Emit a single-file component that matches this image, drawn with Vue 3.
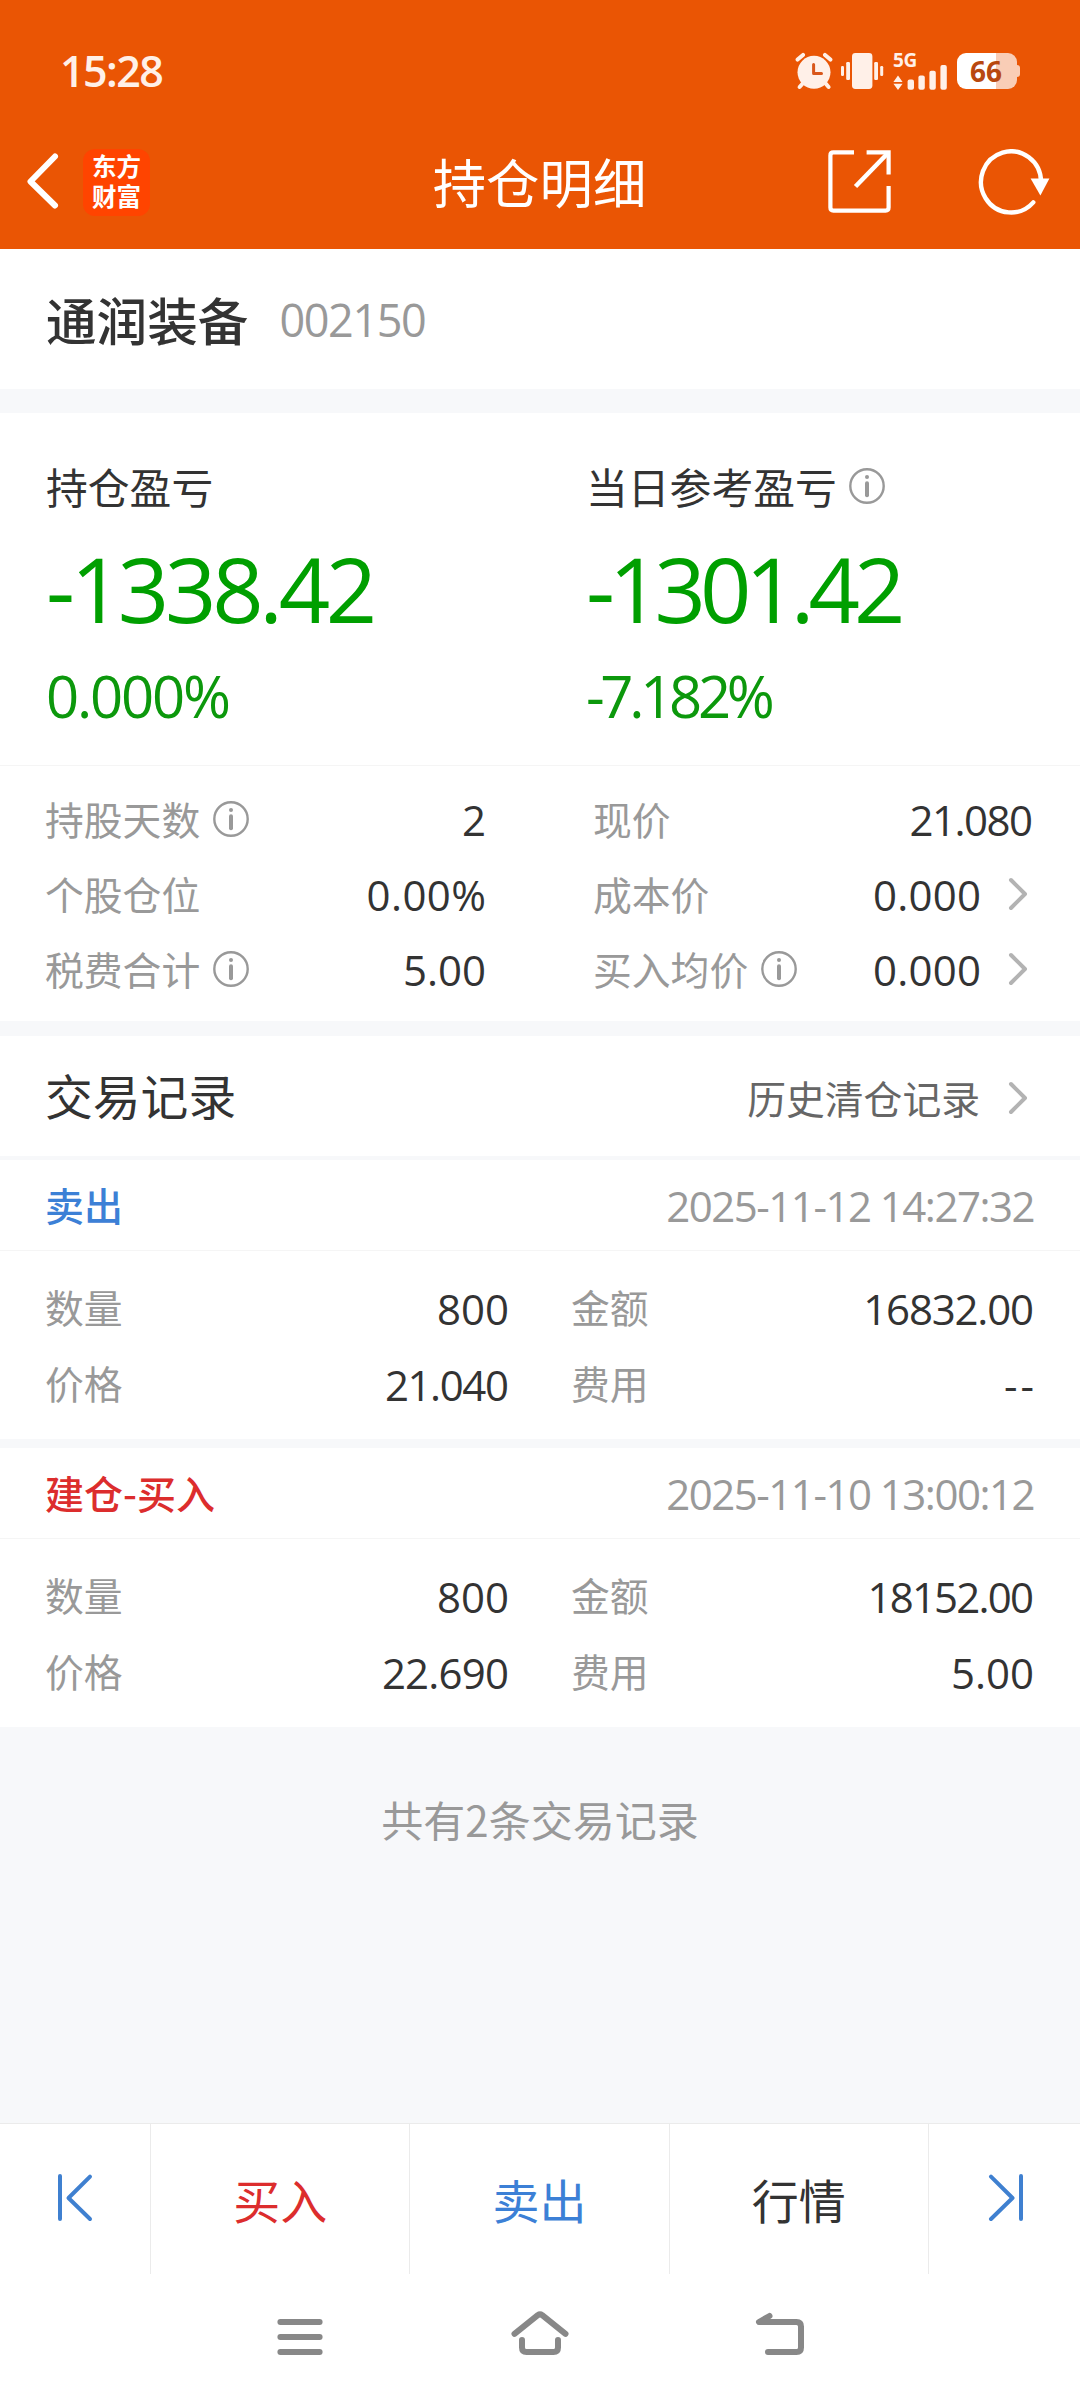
<script setup>
import { h } from 'vue'

const InfoIcon = () =>
  h('svg', { width: 36, height: 36, viewBox: '0 0 36 36', fill: 'none', stroke: '#999', 'stroke-width': 2.4 }, [
    h('circle', { cx: 18, cy: 18, r: 16.7 }),
    h('circle', { cx: 18, cy: 9, r: 2, fill: '#999', stroke: 'none' }),
    h('path', { d: 'M18 15.2V27.3', 'stroke-width': 4, 'stroke-linecap': 'round' }),
  ])

const ChevronIcon = () =>
  h('svg', { width: 20, height: 34, viewBox: '0 0 20 34', fill: 'none', stroke: '#b3b3b3', 'stroke-width': 4, 'stroke-linecap': 'round', 'stroke-linejoin': 'round' }, [
    h('path', { d: 'M3 3L17 17L3 31' }),
  ])

const profits = [
  { label: '持仓盈亏', amount: '-1338.42', amountGap: -4.3, rate: '0.000%', rateGap: -2.2 },
  { label: '当日参考盈亏', info: true, amount: '-1301.42', amountGap: -6, rate: '-7.182%', rateGap: -4.3 },
]

const stats = [
  [
    { label: '持股天数', info: true, value: '2', gap: 0 },
    { label: '个股仓位', value: '0.00%', gap: 0.4 },
    { label: '税费合计', info: true, value: '5.00', gap: 0 },
  ],
  [
    { label: '现价', value: '21.080', gap: -1.5 },
    { label: '成本价', value: '0.000', gap: 0.2, link: true },
    { label: '买入均价', info: true, value: '0.000', gap: 0.2, link: true },
  ],
]

const records = [
  {
    type: '卖出', kind: 'sell', time: '2025-11-12 14:27:32',
    cells: [
      { label: '数量', value: '800', gap: 0 },
      { label: '金额', value: '16832.00', gap: -1.2 },
      { label: '价格', value: '21.040', gap: -1.4 },
      { label: '费用', value: '--', gap: 3 },
    ],
  },
  {
    type: '建仓-买入', kind: 'buy', time: '2025-11-10 13:00:12',
    cells: [
      { label: '数量', value: '800', gap: 0 },
      { label: '金额', value: '18152.00', gap: -1.8 },
      { label: '价格', value: '22.690', gap: -0.8 },
      { label: '费用', value: '5.00', gap: 0 },
    ],
  },
]

const track = (gap) => ({ letterSpacing: gap + 'px', marginRight: -gap + 'px' })
</script>

<template>
  <div class="app">
    <header class="header">
      <div class="status">
        <span class="clock">15:28</span>
        <div class="status-icons">
          <svg class="alarm" width="38" height="38" viewBox="0 0 38 38">
            <g stroke="#fff0e8" stroke-width="4" stroke-linecap="round">
              <path d="M2.6 7.6L8 2.9M35.4 7.6L30 2.9" />
              <path d="M9 30L4.6 35M29.4 30L33.6 35" />
            </g>
            <circle cx="19" cy="20.3" r="16.5" fill="#fff0e8" />
            <path d="M18.6 12.4V21.4H26.5" fill="none" stroke="#d9561a" stroke-width="3" stroke-linecap="round" stroke-linejoin="round" />
          </svg>
          <svg class="vibrate" width="43" height="38" viewBox="0 0 43 38" fill="#fff0e8">
            <rect x="0" y="14" width="3" height="10" rx="1.2" />
            <rect x="5.2" y="10" width="3.8" height="18" rx="1.2" />
            <rect x="11" y="1" width="20.4" height="36" rx="3.4" />
            <rect x="33.2" y="10" width="3.8" height="18" rx="1.2" />
            <rect x="39.2" y="14" width="3" height="10" rx="1.2" />
          </svg>
          <div class="signal">
            <span class="net">5G</span>
            <svg width="55" height="25" viewBox="0 0 55 25" fill="#fff0e8">
              <path d="M5 10.5L9.6 17H0.4ZM5 25L9.6 18.8H0.4Z" />
              <rect x="14.6" y="14.4" width="6.4" height="10.4" rx="2" />
              <rect x="25.4" y="10.4" width="6.4" height="14.4" rx="2" />
              <rect x="36.4" y="5.8" width="6.4" height="19" rx="2" />
              <rect x="47.4" y="0" width="6.4" height="24.8" rx="2" />
            </svg>
          </div>
          <div class="battery"><span class="level">66</span></div>
        </div>
      </div>
      <div class="titlebar">
        <div class="lead">
          <svg width="34" height="58" viewBox="0 0 34 58" fill="none" stroke="#fff" stroke-width="6" stroke-linecap="round" stroke-linejoin="round">
            <path d="M30 3.5L5.5 28.5L30 52.5" />
          </svg>
          <div class="logo">东方<br />财富</div>
        </div>
        <h1 class="title">持仓明细</h1>
        <div class="tools">
          <svg width="64" height="64" viewBox="0 0 64 64" fill="none" stroke="#fff" stroke-width="4.2">
            <path d="M26 2.4H5.4Q2.4 2.4 2.4 5.4V57.6Q2.4 60.6 5.4 60.6H57.6Q60.6 60.6 60.6 57.6V36" />
            <path d="M38.6 2.4H60.6V24.5" />
            <path d="M60 3L27.5 36.5" stroke-width="4.6" />
          </svg>
          <svg width="74" height="66" viewBox="0 0 74 66" fill="none">
            <path d="M63 32.6A30 30.6 0 1 0 55.3 53.4" stroke="#fff" stroke-width="4.4" stroke-linecap="round" />
            <path d="M52.6 29.6H71.4L62.4 46.4Z" fill="#fff" />
          </svg>
        </div>
      </div>
    </header>

    <section class="stock">
      <h2 class="stock-name">通润装备</h2>
      <span class="stock-code num">002150</span>
    </section>

    <section class="profit">
      <div v-for="p in profits" :key="p.label" class="profit-col">
        <div class="profit-label"><span>{{ p.label }}</span><InfoIcon v-if="p.info" /></div>
        <div class="profit-amount num"><span :style="track(p.amountGap)">{{ p.amount }}</span></div>
        <div class="profit-rate num"><span :style="track(p.rateGap)">{{ p.rate }}</span></div>
      </div>
    </section>

    <section class="stats">
      <div v-for="(col, i) in stats" :key="i" class="stats-col">
        <div v-for="s in col" :key="s.label" class="stat">
          <span class="label">{{ s.label }}</span>
          <InfoIcon v-if="s.info" />
          <span class="value num"><span :style="track(s.gap)">{{ s.value }}</span></span>
          <ChevronIcon v-if="s.link" class="chev" />
        </div>
      </div>
    </section>

    <section class="history-head">
      <h3 class="history-title">交易记录</h3>
      <span class="history-link">历史清仓记录</span>
      <ChevronIcon class="chev" />
    </section>

    <section v-for="r in records" :key="r.time" class="record">
      <div class="record-head">
        <span class="record-type" :class="r.kind">{{ r.type }}</span>
        <span class="record-time num">{{ r.time }}</span>
      </div>
      <div class="record-body">
        <div v-for="c in r.cells" :key="c.label" class="cell">
          <span class="label">{{ c.label }}</span>
          <span class="value num"><span :style="track(c.gap)">{{ c.value }}</span></span>
        </div>
      </div>
    </section>

    <div class="total">共有2条交易记录</div>

    <nav class="actions">
      <button class="edge first">
        <svg width="36" height="50" viewBox="0 0 36 50" fill="none" stroke="#3f80d0" stroke-width="4" stroke-linecap="round" stroke-linejoin="round">
          <path d="M3 3V46M33 3.6L11.5 25L33 46" />
        </svg>
      </button>
      <button class="act buy">买入</button>
      <button class="act sell">卖出</button>
      <button class="act">行情</button>
      <button class="edge last">
        <svg width="36" height="50" viewBox="0 0 36 50" fill="none" stroke="#3f80d0" stroke-width="4" stroke-linecap="round" stroke-linejoin="round">
          <path d="M33 3V46M3 3.6L24.5 25L3 46" />
        </svg>
      </button>
    </nav>

    <footer class="sysnav">
      <svg width="60" height="60" viewBox="0 0 60 60" stroke="#888" stroke-width="6" stroke-linecap="round">
        <path d="M10.4 22H49.6M10.4 37H49.6M10.4 52H49.6" />
      </svg>
      <svg width="60" height="60" viewBox="0 0 60 60" fill="none" stroke="#888" stroke-width="6" stroke-linecap="round" stroke-linejoin="round">
        <path d="M4.5 33.8L27.8 15.2Q30 13.6 32.2 15.2L55.5 33.8" />
        <path d="M12 40V47.5Q12 52 16.5 52H43.5Q48 52 48 47.5V40" />
      </svg>
      <svg width="60" height="60" viewBox="0 0 60 60" fill="none" stroke="#888" stroke-width="6" stroke-linecap="round" stroke-linejoin="round">
        <path d="M19.5 16L9 22H46.5Q51 22 51 26.5V47.5Q51 52 46.5 52H18" />
      </svg>
    </footer>
  </div>
</template>

<style>
body {
  margin: 0;
  background: #f7f8fa;
}
</style>

<style scoped>
.app {
  width: 1080px;
  height: 2400px;
  display: flex;
  flex-direction: column;
  background: #f7f8fa;
  color: #333;
  font-family: "Noto Sans CJK SC", sans-serif;
  overflow: hidden;
}
.app * {
  box-sizing: border-box;
}
h1, h2, h3 {
  margin: 0;
  font-weight: 400;
}
svg {
  display: block;
  flex: none;
}
.num {
  font-family: "Open Sans", "Noto Sans CJK SC", sans-serif;
  white-space: nowrap;
}

/* header */
.header {
  flex: none;
  height: 249px;
  background: #ea5504;
  color: #fff;
}
.status {
  height: 142px;
  padding: 0 60px;
  display: flex;
  align-items: center;
  justify-content: space-between;
}
.clock {
  font-family: "Open Sans", sans-serif;
  font-size: 43px;
  font-weight: 600;
  line-height: 60px;
  color: #fff0e8;
  letter-spacing: -1.6px;
}
.status-icons {
  display: flex;
  align-items: center;
}
.vibrate {
  margin-left: 8px;
}
.signal {
  width: 55px;
  height: 38px;
  margin-left: 9px;
  display: flex;
  flex-direction: column;
  justify-content: space-between;
}
.net {
  font-family: "Open Sans", sans-serif;
  font-size: 19px;
  font-weight: 700;
  line-height: 17px;
  height: 13px;
  color: #fff0e8;
  letter-spacing: -0.3px;
}
.battery {
  position: relative;
  width: 60px;
  height: 36px;
  margin: 0 3px 0 9px;
  border-radius: 9px;
  background: linear-gradient(90deg, #fff 39px, #f9cdb6 39px);
  text-align: center;
}
.battery::after {
  content: "";
  position: absolute;
  right: -3px;
  top: 12px;
  width: 3px;
  height: 12px;
  border-radius: 0 3px 3px 0;
  background: #f9cdb6;
}
.level {
  display: block;
  font-family: "Open Sans", sans-serif;
  font-size: 28px;
  font-weight: 700;
  line-height: 36px;
  padding-right: 2px;
  color: #b8480f;
}
.titlebar {
  height: 80px;
  padding: 0 28px 0 25px;
  display: grid;
  grid-template-columns: 1fr auto 1fr;
  align-items: center;
}
.lead {
  display: flex;
  align-items: center;
  gap: 24px;
}
.logo {
  width: 67px;
  height: 67px;
  border-radius: 12px;
  background: #ff4400;
  text-align: center;
  font-size: 24.5px;
  font-weight: 700;
  line-height: 30px;
  padding-top: 2px;
}
.title {
  font-size: 53.4px;
  line-height: 76px;
  padding: 0 0 2px 2px;
}
.tools {
  display: flex;
  justify-content: flex-end;
  align-items: center;
  gap: 86px;
}

/* stock */
.stock {
  flex: none;
  height: 140px;
  padding: 0 46px;
  background: #fff;
  display: flex;
  align-items: center;
  gap: 31px;
}
.stock-name {
  font-size: 50.6px;
  font-weight: 500;
  line-height: 70px;
}
.stock-code {
  font-size: 45px;
  line-height: 70px;
  padding-top: 2px;
  color: #999;
  letter-spacing: -1.4px;
}

/* profit */
.profit {
  flex: none;
  height: 353px;
  margin-top: 24px;
  padding: 43px 46px 0 46px;
  background: #fff;
  border-bottom: 1px solid #f5f5f5;
  display: flex;
}
.profit-col {
  flex: 0 0 540px;
}
.profit-label {
  height: 60px;
  display: flex;
  align-items: center;
  gap: 12px;
  font-size: 41.8px;
  line-height: 60px;
}
.profit-amount {
  height: 130px;
  margin-top: 7px;
  font-size: 90px;
  line-height: 130px;
  color: #009f00;
}
.profit-rate {
  height: 80px;
  margin-top: 3px;
  font-size: 58px;
  line-height: 80px;
  color: #0c980c;
}

/* stats */
.stats {
  flex: none;
  height: 255px;
  padding: 16px 47px 0 45px;
  background: #fff;
  display: flex;
  gap: 107px;
}
.stats-col:first-child {
  flex: 0 0 441px;
}
.stats-col:last-child {
  flex: 1;
}
.stat {
  height: 75px;
  display: flex;
  align-items: center;
}
.stat svg {
  margin: 0 0 2px 13px;
}
.stat svg.chev {
  margin: 0 5px 2px 27px;
}
.label {
  padding-bottom: 4px;
  font-size: 38.8px;
  color: #999;
  font-weight: 400;
}
.value {
  margin-left: auto;
  font-size: 42px;
  font-weight: 500;
  color: #333;
}

/* history */
.history-head {
  flex: none;
  height: 120px;
  margin-top: 15px;
  padding: 0 52px 0 45px;
  background: #fff;
  display: flex;
  align-items: center;
}
.history-title {
  flex: 1;
  font-size: 47.8px;
  padding-bottom: 3px;
}
.history-link {
  font-size: 38.8px;
  padding-top: 2px;
  color: #666;
}
.history-head .chev {
  margin: 3px 0 0 28px;
}
.record {
  flex: none;
  height: 279px;
  background: #fff;
}
.history-head + .record {
  margin-top: 4px;
}
.record + .record {
  margin-top: 9px;
}
.record-head {
  height: 91px;
  padding: 0 46px 0 45px;
  border-bottom: 1px solid #f5f5f5;
  display: flex;
  align-items: center;
  justify-content: space-between;
}
.record-type {
  font-size: 39px;
  font-weight: 500;
  padding-bottom: 2px;
}
.record-time {
  font-size: 42px;
  color: #999;
  letter-spacing: -1.5px;
}
.sell {
  color: #3c80d6;
}
.buy {
  color: #dc2d2d;
}
.record-body {
  padding: 19px 46px 0 45px;
  display: grid;
  grid-template-columns: 464px 463px;
  column-gap: 62px;
  grid-auto-rows: 76px;
}
.cell {
  display: flex;
  align-items: center;
}
.total {
  flex: 1;
  padding-top: 60px;
  text-align: center;
  font-size: 42px;
  line-height: 64px;
  color: #999;
}

/* bottom actions */
.actions {
  flex: none;
  height: 151px;
  border-top: 1px solid #ebebeb;
  background: #fff;
  display: flex;
}
.actions button {
  margin: 0;
  padding: 0;
  border: 0;
  background: none;
  font: inherit;
}
.actions .act {
  flex: 1;
  border-right: 1px solid #ebebeb;
  font-size: 47px;
  line-height: 148px;
  color: #333;
}
.actions .buy {
  color: #dc2d2d;
}
.actions .sell {
  color: #3c80d6;
}
.actions .edge {
  flex: 0 0 151px;
  display: flex;
  justify-content: center;
  padding-top: 49px;
}
.actions .first {
  border-right: 1px solid #ebebeb;
}
.actions .last {
  padding-left: 3px;
}
.sysnav {
  flex: none;
  height: 126px;
  padding: 26px 270px 0;
  background: #fff;
  display: flex;
  justify-content: space-between;
}
</style>
